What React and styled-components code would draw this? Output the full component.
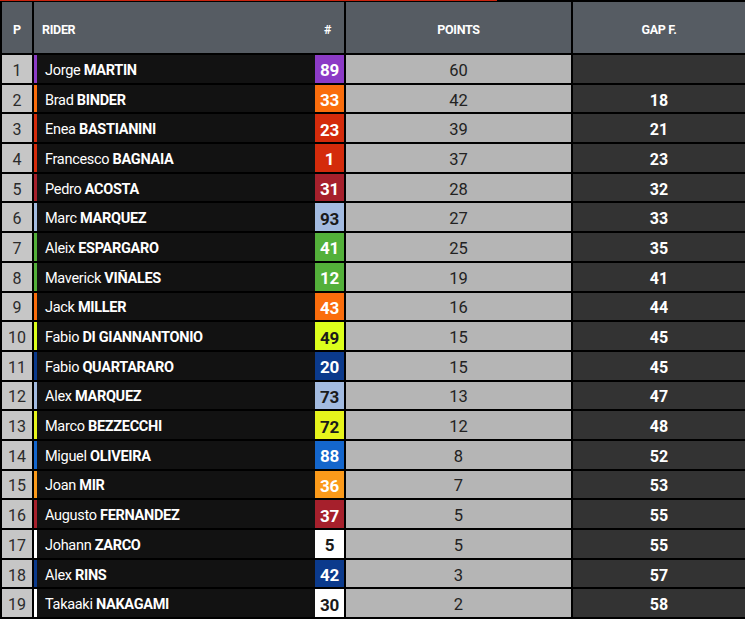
import React from "react";
import styled, { createGlobalStyle } from "styled-components";

const riders = [
  { pos: 1, first: "Jorge", last: "MARTIN", num: 89, color: "#8c3bc6", points: 60, gap: "" },
  { pos: 2, first: "Brad", last: "BINDER", num: 33, color: "#fa6d0c", points: 42, gap: 18 },
  { pos: 3, first: "Enea", last: "BASTIANINI", num: 23, color: "#d42b0b", points: 39, gap: 21 },
  { pos: 4, first: "Francesco", last: "BAGNAIA", num: 1, color: "#d42b0b", points: 37, gap: 23 },
  { pos: 5, first: "Pedro", last: "ACOSTA", num: 31, color: "#a6202c", points: 28, gap: 32 },
  { pos: 6, first: "Marc", last: "MARQUEZ", num: 93, color: "#a3bbe0", points: 27, gap: 33, dark: true },
  { pos: 7, first: "Aleix", last: "ESPARGARO", num: 41, color: "#53b03a", points: 25, gap: 35 },
  { pos: 8, first: "Maverick", last: "VIÑALES", num: 12, color: "#53b03a", points: 19, gap: 41 },
  { pos: 9, first: "Jack", last: "MILLER", num: 43, color: "#fa6d0c", points: 16, gap: 44 },
  { pos: 10, first: "Fabio", last: "DI GIANNANTONIO", num: 49, color: "#dcff1c", points: 15, gap: 45, dark: true },
  { pos: 11, first: "Fabio", last: "QUARTARARO", num: 20, color: "#0b3a8c", points: 15, gap: 45 },
  { pos: 12, first: "Alex", last: "MARQUEZ", num: 73, color: "#a3bbe0", points: 13, gap: 47, dark: true },
  { pos: 13, first: "Marco", last: "BEZZECCHI", num: 72, color: "#e6f41c", points: 12, gap: 48, dark: true },
  { pos: 14, first: "Miguel", last: "OLIVEIRA", num: 88, color: "#1466cc", points: 8, gap: 52 },
  { pos: 15, first: "Joan", last: "MIR", num: 36, color: "#fb9a1a", points: 7, gap: 53 },
  { pos: 16, first: "Augusto", last: "FERNANDEZ", num: 37, color: "#a6202c", points: 5, gap: 55 },
  { pos: 17, first: "Johann", last: "ZARCO", num: 5, color: "#ffffff", points: 5, gap: 55, dark: true },
  { pos: 18, first: "Alex", last: "RINS", num: 42, color: "#0b3a8c", points: 3, gap: 57 },
  { pos: 19, first: "Takaaki", last: "NAKAGAMI", num: 30, color: "#ffffff", points: 2, gap: 58, dark: true },
];

const GlobalStyle = createGlobalStyle`
  html, body {
    margin: 0;
    padding: 0;
    background: #000;
  }
  body {
    font-family: Roboto, "Liberation Sans", sans-serif;
  }
`;

const Board = styled.div`
  width: 745px;
  height: 619px;
  overflow: hidden;
  background: #000;
  position: relative;
  &::before {
    content: "";
    position: absolute;
    left: 0;
    top: 0;
    width: 497px;
    height: 1px;
    background: #c9240e;
  }
`;

const Grid = styled.div`
  display: grid;
  grid-template-columns: 30px 310px 225px 172px;
  column-gap: 2px;
  row-gap: 2px;
  padding: 2px 0 0 2px;
  grid-auto-rows: 27.7px;
  grid-template-rows: 51px;
`;

const HeadCell = styled.div`
  background: #565c63;
  color: #fff;
  font-size: 12.5px;
  font-weight: 700;
  display: flex;
  align-items: center;
  justify-content: ${(p) => (p.left ? "space-between" : "center")};
  padding: ${(p) => (p.left ? "3px 13px 0 8px" : "3px 0 0")};
  letter-spacing: -0.3px;
`;

const PosCell = styled.div`
  background: #c6c6c6;
  color: #2b2b2b;
  font-size: 16px;
  padding-top: 3px;
  display: flex;
  align-items: center;
  justify-content: center;
`;

const RiderCell = styled.div`
  background: #121212;
  border-left: 3px solid ${(p) => p.$color};
  display: flex;
  align-items: center;
  color: #fff;
  font-size: 14.5px;
  letter-spacing: -0.3px;
  padding-left: 8px;
`;

const Name = styled.span`
  flex: 1;
  padding-top: 3px;
  b {
    font-weight: 700;
  }
`;

const Badge = styled.div`
  width: 29px;
  align-self: stretch;
  background: ${(p) => p.$color};
  color: ${(p) => (p.$dark ? "#1a1a1a" : "#fff")};
  font-weight: 700;
  font-size: 17px;
  padding-top: 3px;
  display: flex;
  align-items: center;
  justify-content: center;
`;

const PointsCell = styled.div`
  background: #b5b5b5;
  color: #222;
  font-size: 16.5px;
  padding-top: 3px;
  display: flex;
  align-items: center;
  justify-content: center;
`;

const GapCell = styled.div`
  background: #333333;
  color: #fff;
  font-weight: 700;
  font-size: 16px;
  padding-top: 3px;
  display: flex;
  align-items: center;
  justify-content: center;
`;

export default function App() {
  return (
    <>
      <GlobalStyle />
      <Board>
        <Grid>
          <HeadCell>P</HeadCell>
          <HeadCell left>
            <span>RIDER</span>
            <span>#</span>
          </HeadCell>
          <HeadCell>POINTS</HeadCell>
          <HeadCell>GAP F.</HeadCell>
          {riders.map((r) => (
            <React.Fragment key={r.pos}>
              <PosCell>{r.pos}</PosCell>
              <RiderCell $color={r.color}>
                <Name>
                  {r.first} <b>{r.last}</b>
                </Name>
                <Badge $color={r.color} $dark={r.dark}>
                  {r.num}
                </Badge>
              </RiderCell>
              <PointsCell>{r.points}</PointsCell>
              <GapCell>{r.gap}</GapCell>
            </React.Fragment>
          ))}
        </Grid>
      </Board>
    </>
  );
}
